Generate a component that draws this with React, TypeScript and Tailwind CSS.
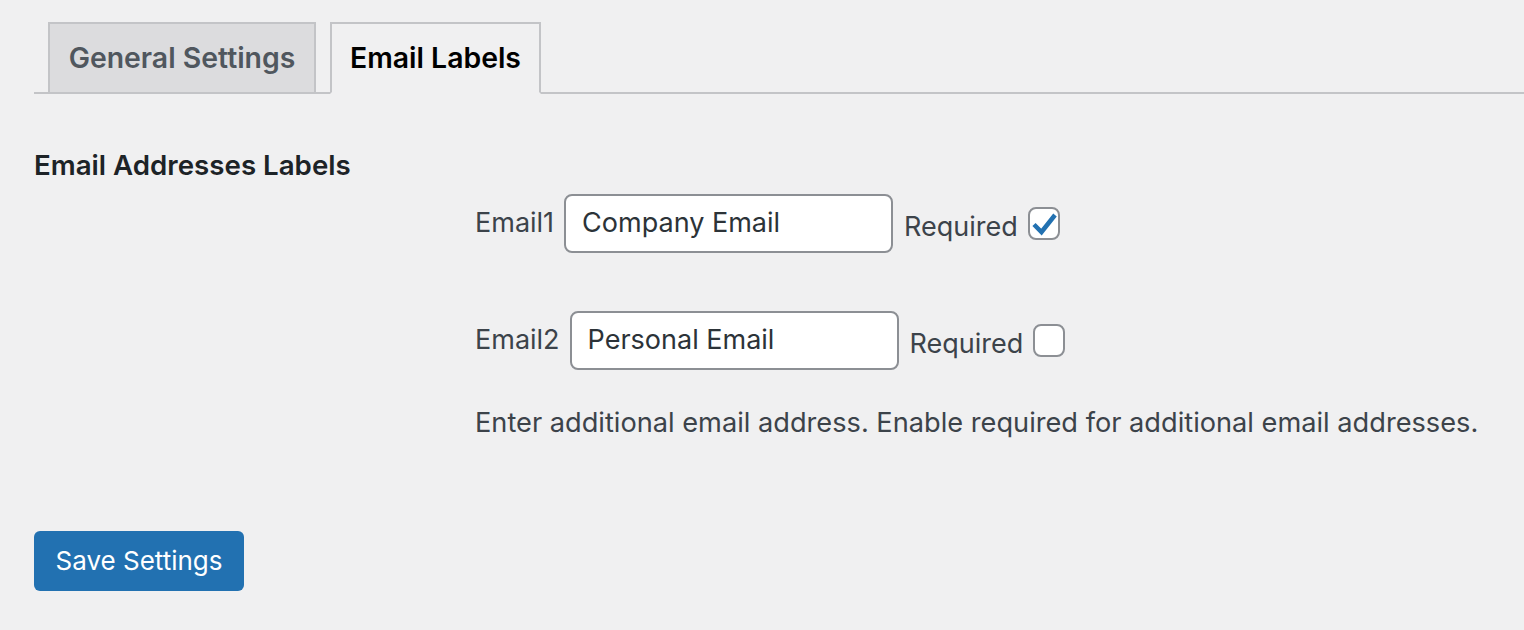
import React from 'react';

const font = { fontFamily: 'Inter, "Noto Sans", sans-serif' };

function CheckBox({ checked }: { checked?: boolean }) {
  return (
    <span className="ml-[10px] flex h-[33px] w-[32px] items-center justify-center rounded-[8px] border-2 border-[#8c8f94] bg-white">
      {checked && (
        <svg width="28" height="29" viewBox="0 0 28 29">
          <path d="M4 15.5 L11.5 23 L25 6" fill="none" stroke="#2271b1" strokeWidth="4.5" strokeLinejoin="miter" />
        </svg>
      )}
    </span>
  );
}

function EmailRow({ label, value, checked }: { label: string; value: string; checked?: boolean }) {
  return (
    <div className="flex items-center">
      <span className="mr-[10px] text-[27px] text-[#3c434a]">{label}</span>
      <div className="flex h-[59px] w-[329px] items-center rounded-[8px] border-2 border-[#8c8f94] bg-white pl-[16px] text-[27px] text-[#2c3338]">
        {value}
      </div>
      <span className="ml-[11px] mt-[7px] text-[27px] text-[#3c434a]">Required</span>
      <CheckBox checked={checked} />
    </div>
  );
}

export default function App() {
  return (
    <div className="min-h-[630px] w-[1524px] bg-[#f0f0f1] pl-[34px] pt-[22px]" style={font}>
      {/* Tabs */}
      <div className="flex items-end border-b-2 border-[#c3c4c7]">
        <div className="-mb-[2px] ml-[14px] flex h-[72px] w-[268px] items-center justify-center border-2 border-[#c3c4c7] bg-[#dcdcde] text-[28.4px] font-semibold text-[#50575e]">
          General Settings
        </div>
        <div className="-mb-[2px] ml-[14px] flex h-[72px] w-[211px] items-center justify-center border-2 border-[#c3c4c7] border-b-[#f0f0f1] bg-[#f0f0f1] text-[28.4px] font-semibold text-black">
          Email Labels
        </div>
      </div>

      {/* Section */}
      <h2 className="mt-[55px] text-[27.7px] font-semibold leading-[32px] text-[#1d2327]">Email Addresses Labels</h2>

      <div className="ml-[441px] mt-[13px] flex flex-col">
        <EmailRow label="Email1" value="Company Email" checked />
        <div className="mt-[58px] flex">
          <EmailRow label="Email2" value="Personal Email" />
        </div>
        <p className="mt-[33px] text-[27.2px] text-[#3c434a]">
          Enter additional email address. Enable required for additional email addresses.
        </p>
      </div>

      <button className="mt-[87px] flex h-[60px] w-[210px] items-center justify-center rounded-[6px] bg-[#2271b1] text-[26px] text-white">
        Save Settings
      </button>
    </div>
  );
}
